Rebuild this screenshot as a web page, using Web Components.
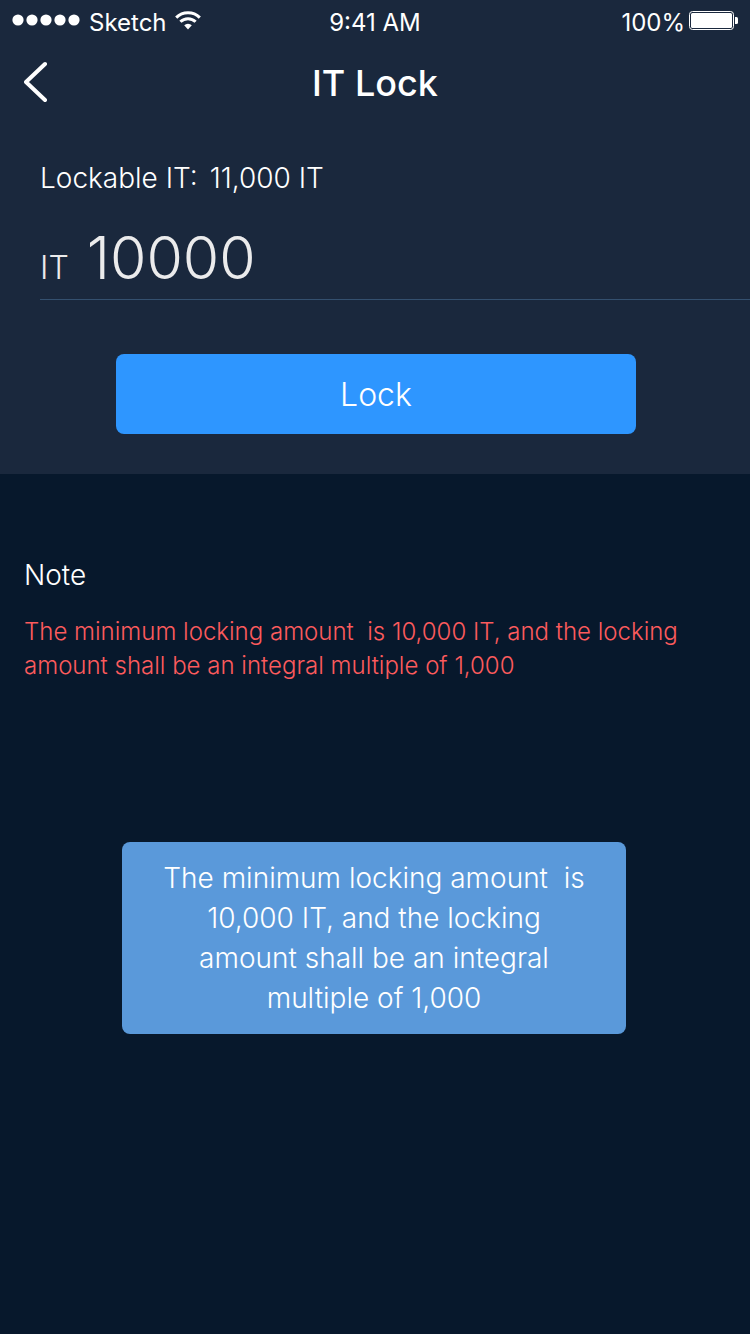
<!DOCTYPE html>
<html lang="en">
<head>
<meta charset="utf-8">
<meta name="viewport" content="width=device-width, initial-scale=1">
<title>IT Lock</title>
<style>
  html { height: 100%; }
  body { margin: 0; min-height: 100%; background: #07182c; color: #fff; font-family: Inter, "Liberation Sans", sans-serif; font-weight: 300; }
</style>
</head>
<body>
<lock-screen></lock-screen>
<script>
const define = (name, html) => {
  const template = document.createElement('template');
  template.innerHTML = html;
  customElements.define(name, class extends HTMLElement {
    constructor() {
      super();
      this.attachShadow({ mode: 'open' }).append(template.content.cloneNode(true));
    }
  });
};

define('status-bar', `
  <style>
    :host { display: grid; grid-template-columns: 1fr auto 1fr; align-items: center; height: 40px; padding: 0 12px; font-size: 24px; line-height: 32px; font-weight: 400; }
    div { display: flex; align-items: center; gap: 8px; }
    .right { justify-content: flex-end; gap: 4px; }
    span { padding-top: 6px; }
    svg { display: block; }
  </style>
  <div>
    <svg width="69" height="12" fill="#fff" aria-hidden="true"><circle cx="6" cy="6" r="5.6"/><circle cx="20" cy="6" r="5.6"/><circle cx="34" cy="6" r="5.6"/><circle cx="48" cy="6" r="5.6"/><circle cx="62" cy="6" r="5.6"/></svg>
    <span>Sketch</span>
    <svg width="26" height="19" viewBox="0 0 26 19" fill="none" stroke="#fff" stroke-width="3" aria-hidden="true"><path d="M1.2 6.6a16.6 16.6 0 0 1 23.6 0"/><path d="M5.4 10.8a10.7 10.7 0 0 1 15.2 0"/><path d="M13 18.4l-3.8-4.1a5.4 5.4 0 0 1 7.6 0z" fill="#fff" stroke="none"/></svg>
  </div>
  <span>9:41 AM</span>
  <div class="right">
    <span>100%</span>
    <svg width="49" height="19" viewBox="0 0 49 19" aria-hidden="true"><rect x=".5" y=".5" width="44" height="18" rx="3" fill="none" stroke="#fff"/><rect x="2" y="2" width="41" height="15" rx="1.5" fill="#fff"/><path d="M46 6h1.5q1.5 0 1.5 1.5v4q0 1.5-1.5 1.5h-1.5z" fill="#fff"/></svg>
  </div>
`);

define('nav-bar', `
  <style>
    :host { display: grid; grid-template-columns: 48px 1fr 48px; align-items: center; height: 84px; padding: 0 12px; }
    button { display: flex; justify-content: center; width: 48px; height: 64px; align-items: center; padding: 0; border: 0; background: none; color: inherit; }
    h1 { margin: 0; padding-top: 2px; text-align: center; font-size: 36px; line-height: 48px; font-weight: 500; }
  </style>
  <button type="button" aria-label="Back"><svg width="24" height="42" viewBox="0 0 24 42" fill="none" stroke="#fff" stroke-width="4" stroke-linecap="round" stroke-linejoin="round" aria-hidden="true"><path d="M21 3L2 21l19 18"/></svg></button>
  <h1><slot></slot></h1>
`);

define('amount-field', `
  <style>
    :host { display: flex; align-items: baseline; gap: 18px; height: 84px; border-bottom: 1px solid #34506f; color: #ebebec; }
    label { font-size: 32px; line-height: 40px; }
    input { flex: 1; min-width: 0; height: 84px; padding: 0; border: 0; outline: 0; background: none; color: inherit; font: inherit; font-size: 59px; }
  </style>
  <label for="amount">IT</label>
  <input id="amount" inputmode="numeric" value="10000">
`);

define('primary-button', `
  <style>
    :host { display: block; }
    button { display: block; width: 100%; height: 80px; padding: 2px 0 0; border: 0; border-radius: 8px; background: #2e96ff; color: #fff; font: inherit; font-size: 32px; line-height: 40px; }
  </style>
  <button type="button"><slot></slot></button>
`);

define('lock-form', `
  <style>
    :host { display: block; padding: 34px 0 40px 40px; }
    p { display: flex; gap: 12px; margin: 0; font-size: 28px; line-height: 40px; }
    amount-field { margin-top: 17px; }
    primary-button { margin: 54px 114px 0 76px; }
  </style>
  <p><span>Lockable IT:</span><span>11,000 IT</span></p>
  <amount-field></amount-field>
  <primary-button>Lock</primary-button>
`);

define('lock-note', `
  <style>
    :host { display: block; padding: 81px 48px 0 24px; }
    h2 { margin: 0; font-size: 28px; line-height: 40px; font-weight: inherit; }
    p { margin: 20px 0 0; color: #fc5b5d; font-size: 24px; line-height: 34px; white-space: pre-wrap; }
  </style>
  <h2>Note</h2>
  <p><slot></slot></p>
`);

define('toast-message', `
  <style>
    :host { display: block; box-sizing: border-box; max-width: 504px; padding: 16px 36px; border-radius: 8px; background: #5a99da; text-align: center; font-size: 28px; line-height: 40px; }
    div { white-space: pre-wrap; }
  </style>
  <div role="status"><slot></slot></div>
`);

define('lock-screen', `
  <style>
    :host { display: block; }
    header, section { background: #1a283d; }
    main { display: flow-root; }
    .overlay { padding: 159px 2px 0 0; }
    toast-message { margin: 0 auto; }
  </style>
  <header><status-bar></status-bar><nav-bar>IT Lock</nav-bar></header>
  <main>
    <section><lock-form></lock-form></section>
    <lock-note>The minimum locking amount  is 10,000 IT, and the locking amount shall be an integral multiple of 1,000</lock-note>
    <div class="overlay"><toast-message>The minimum locking amount  is 10,000 IT, and the locking amount shall be an integral multiple of 1,000</toast-message></div>
  </main>
`);
</script>
</body>
</html>
